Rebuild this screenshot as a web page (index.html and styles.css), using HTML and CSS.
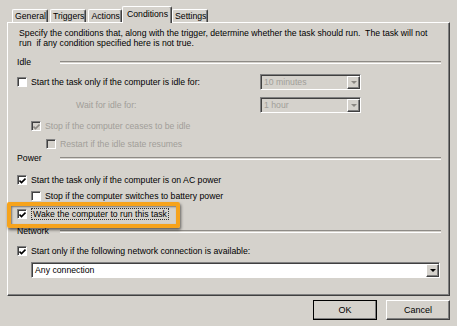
FILE: index.html
```html
<!DOCTYPE html>
<html>

<head>
    <title>Conditions</title>
    <link rel="stylesheet" href="styles.css">
</head>

<body>
    <div class="dialog">
        <div class="tabs">
            <div class="tab">General</div>
            <div class="tab">Triggers</div>
            <div class="tab">Actions</div>
            <div class="tab active">Conditions</div>
            <div class="tab">Settings</div>
        </div>

        <div class="panel">
            <p class="desc">Specify the conditions that, along with the trigger, determine whether the task should run.&nbsp; The task will not<br>run&nbsp; if any condition specified here is not true.</p>

            <div class="group g-idle"><span class="group-name">Idle</span><span class="rule"></span></div>

            <div class="row r-idle">
                <div class="opt">
                    <span class="cb"></span>
                    <span>Start the task only if the computer is idle for:</span>
                </div>
                <div class="select off"><span class="value">10 minutes</span><span class="arrow"></span></div>
            </div>

            <div class="row r-wait">
                <div class="opt off wait-label">Wait for idle for:</div>
                <div class="select off"><span class="value">1 hour</span><span class="arrow"></span></div>
            </div>

            <div class="row r-stop lvl1">
                <div class="opt off">
                    <span class="cb off checked"><svg viewBox="0 0 7 7"><path d="M0.5 3.5 L2.5 5.5 L6.5 1.5" /></svg></span>
                    <span>Stop if the computer ceases to be idle</span>
                </div>
            </div>

            <div class="row r-restart lvl2">
                <div class="opt off">
                    <span class="cb off"></span>
                    <span>Restart if the idle state resumes</span>
                </div>
            </div>

            <div class="group g-power"><span class="group-name">Power</span><span class="rule"></span></div>

            <div class="row r-ac">
                <div class="opt">
                    <span class="cb checked"><svg viewBox="0 0 7 7"><path d="M0.5 3.5 L2.5 5.5 L6.5 1.5" /></svg></span>
                    <span>Start the task only if the computer is on AC power</span>
                </div>
            </div>

            <div class="row r-battery lvl1">
                <div class="opt">
                    <span class="cb"></span>
                    <span>Stop if the computer switches to battery power</span>
                </div>
            </div>

            <div class="row r-wake">
                <div class="opt">
                    <span class="cb checked"><svg viewBox="0 0 7 7"><path d="M0.5 3.5 L2.5 5.5 L6.5 1.5" /></svg></span>
                    <span class="focus">Wake the computer to run this task</span>
                </div>
            </div>

            <div class="group g-network"><span class="group-name">Network</span><span class="rule"></span></div>

            <div class="row r-net">
                <div class="opt">
                    <span class="cb checked"><svg viewBox="0 0 7 7"><path d="M0.5 3.5 L2.5 5.5 L6.5 1.5" /></svg></span>
                    <span>Start only if the following network connection is available:</span>
                </div>
            </div>

            <div class="select wide"><span class="value">Any connection</span><span class="arrow"></span></div>
        </div>

        <div class="buttons">
            <button class="btn">OK</button>
            <button class="btn">Cancel</button>
        </div>

        <!-- highlight drawn over the wake option -->
        <div class="highlight"></div>
    </div>
</body>

</html>
```

FILE: styles.css
```css
body {
    margin: 0;
    background-color: #d5d2cc;
    font-family: "Liberation Sans", Arial, sans-serif;
    font-size: 8.7px;
    color: #000;
}

.dialog {
    position: relative;
    width: 457px;
    height: 326px;
    overflow: hidden;
}

/* tabs */
.tabs {
    display: flex;
    align-items: flex-end;
    height: 22px;
    padding-left: 12px;
}

.tab {
    height: 13px;
    line-height: 13px;
    padding: 0 1px 0 2px;
    margin-right: 2px;
    border-top: 1px solid #fff;
    border-left: 1px solid #fff;
    border-right: 1px solid #404040;
    border-radius: 2px 2px 0 0;
    box-shadow: inset -1px 0 #808080;
    box-sizing: border-box;
    white-space: nowrap;
}

.tab.active {
    position: relative;
    z-index: 1;
    height: 17px;
    line-height: 14px;
    margin: 0 0 -1px -2px;
    padding: 0 3px 0 4px;
    background-color: #d5d2cc;
}

/* panel */
.panel {
    margin: 0 7px;
    height: 274px;
    box-sizing: border-box;
    border-top: 1px solid #fff;
    border-left: 1px solid #fff;
    border-right: 1px solid #404040;
    border-bottom: 1px solid #404040;
    box-shadow: inset -1px -1px #808080;
    padding: 5px 8px 0 9px;
}

.desc {
    margin: 0 0 0 2px;
    line-height: 10px;
    white-space: nowrap;
}

.group {
    display: flex;
    align-items: center;
    height: 12px;
}

.group-name {
    width: 43px;
}

.rule {
    flex: 1;
    height: 1px;
    border-top: 1px solid #8e8b86;
    border-bottom: 1px solid #fff;
}

.g-idle { margin-top: 8px; }
.g-power { margin-top: 1px; }
.g-network { margin-top: 4px; }

.row {
    display: flex;
    align-items: center;
    height: 14px;
    white-space: nowrap;
}

.r-idle { height: 16px; margin-top: 6px; }
.r-wait { height: 16px; margin-top: 7px; }
.r-stop { margin-top: 6px; }
.r-restart { margin-top: 4px; }
.r-ac { margin-top: 9px; }
.r-battery { margin-top: 2px; }
.r-wake { margin-top: 4px; }
.r-net { margin-top: 7px; }

.lvl1 { padding-left: 14px; }
.lvl2 { padding-left: 29px; }

.opt {
    display: flex;
    align-items: center;
    gap: 4px;
}

.r-idle .opt,
.r-wait .opt {
    width: 243px;
    flex: none;
}

.wait-label {
    padding-left: 59px;
    box-sizing: border-box;
}

.off {
    color: #a19e99;
}

/* checkbox */
.cb {
    width: 10px;
    height: 10px;
    box-sizing: border-box;
    border-top: 1px solid #808080;
    border-left: 1px solid #808080;
    border-right: 1px solid #fff;
    border-bottom: 1px solid #fff;
    box-shadow: inset 1px 1px #404040;
    background-color: #fff;
    display: flex;
    align-items: center;
    justify-content: center;
    flex: none;
}

.cb.off {
    background-color: #d5d2cc;
}

.cb svg {
    width: 7px;
    height: 7px;
    margin: 1px 0 0 1px;
}

.cb path {
    fill: none;
    stroke: #000;
    stroke-width: 1.6;
}

.cb.off path {
    stroke: #8a8782;
}

.focus {
    border: 1px dotted #333;
    padding: 0 1px;
    line-height: 10px;
}

/* dropdowns */
.select {
    display: flex;
    align-items: stretch;
    width: 101px;
    height: 16px;
    box-sizing: border-box;
    border-top: 1px solid #808080;
    border-left: 1px solid #808080;
    border-right: 1px solid #fff;
    border-bottom: 1px solid #fff;
    box-shadow: inset 1px 1px #404040;
    padding: 1px 0 0 1px;
    background-color: #fff;
}

.select.off {
    background-color: #d5d2cc;
    color: #a19e99;
}

.select .value {
    flex: 1;
    line-height: 13px;
    padding-left: 2px;
}

.select .arrow {
    width: 13px;
    box-sizing: border-box;
    border-top: 1px solid #fff;
    border-left: 1px solid #fff;
    border-right: 1px solid #404040;
    border-bottom: 1px solid #404040;
    box-shadow: inset -1px -1px #808080;
    background-color: #d5d2cc;
    display: flex;
    align-items: center;
    justify-content: center;
}

.select .arrow::after {
    content: "";
    border-left: 3px solid transparent;
    border-right: 3px solid transparent;
    border-top: 3px solid #000;
    margin-bottom: 1px;
}

.select.off .arrow::after {
    border-top-color: #8a8782;
}

.select.wide {
    width: 409px;
    margin: 4px 0 0 14px;
}

/* buttons */
.buttons {
    display: flex;
    justify-content: flex-end;
    gap: 9px;
    padding: 4px 7px 0 0;
}

.btn {
    width: 64px;
    height: 20px;
    font-family: inherit;
    font-size: 9px;
    background-color: #d5d2cc;
    border-top: 1px solid #fff;
    border-left: 1px solid #fff;
    border-right: 1px solid #404040;
    border-bottom: 1px solid #404040;
    box-shadow: inset -1px -1px #808080;
    padding: 0;
}

.btn:first-child {
    outline: 1px solid #000;
    outline-offset: -1px;
}

/* orange callout over the wake option */
.highlight {
    position: absolute;
    left: 7px;
    top: 202px;
    width: 173px;
    height: 26px;
    box-sizing: border-box;
    border: 4px solid #f6a31c;
    border-radius: 2px;
    box-shadow: 1px 2px 3px rgba(0, 0, 0, 0.55), inset 1px 1px 2px rgba(0, 0, 0, 0.45);
}
```
